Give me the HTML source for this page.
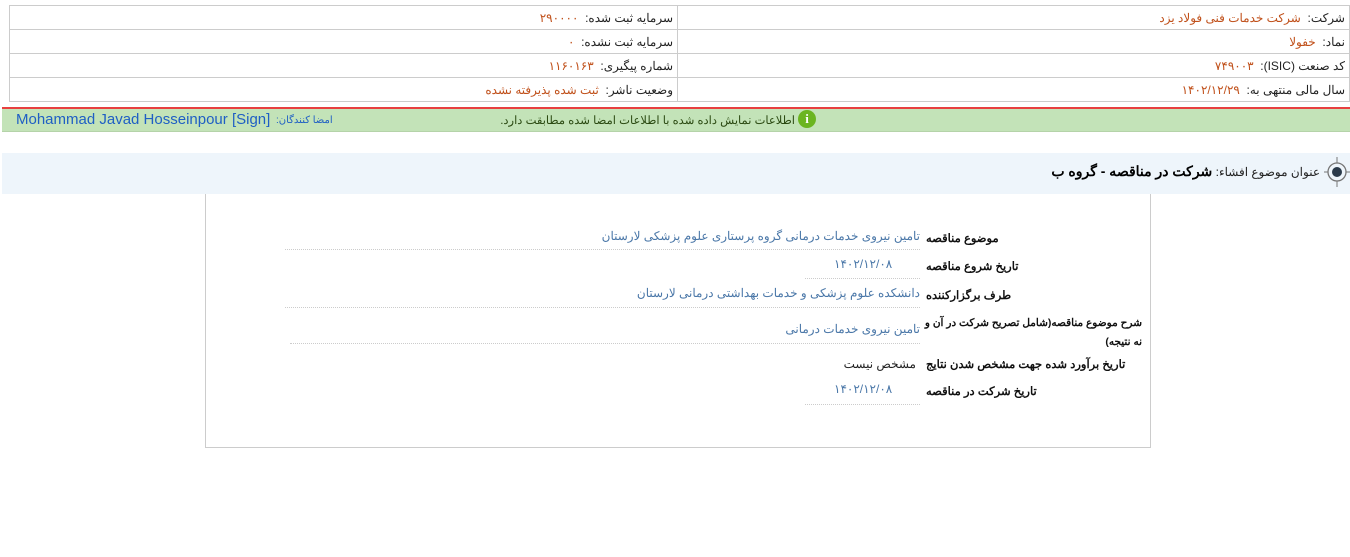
<!DOCTYPE html>
<html><head><meta charset="utf-8"><style>
body{margin:0;width:1350px;height:557px;background:#fff;font-family:"Liberation Sans","Noto Sans CJK SC",sans-serif;font-size:12px;position:relative;overflow:hidden}
.a{position:absolute;white-space:nowrap}
table.t{position:absolute;left:9px;top:5px;width:1341px;border-collapse:collapse;direction:rtl}
table.t td{border:1px solid #ccc;height:23px;padding:0 4px;text-align:right;font-size:12px;color:#222}
.o{color:#c0501a}
.lbl{font-weight:bold;font-size:11.5px;color:#111;direction:rtl;text-align:right}
.val{color:#4a77a8;direction:rtl}
.dl{position:absolute;border-bottom:1px dotted #ccc;height:0}
</style></head><body>
<table class="t"><tr><td style="width:663px">شرکت:&nbsp; <span class="o">شرکت خدمات فنی فولاد یزد</span></td><td>سرمایه ثبت شده:&nbsp; <span class="o">۲۹۰۰۰۰</span></td></tr>
<tr><td>نماد:&nbsp; <span class="o">خفولا</span></td><td>سرمایه ثبت نشده:&nbsp; <span class="o">۰</span></td></tr>
<tr><td>کد صنعت (ISIC):&nbsp; <span class="o">۷۴۹۰۰۳</span></td><td>شماره پیگیری:&nbsp; <span class="o">۱۱۶۰۱۶۳</span></td></tr>
<tr><td>سال مالی منتهی به:&nbsp; <span class="o">۱۴۰۲/۱۲/۲۹</span></td><td>وضعیت ناشر:&nbsp; <span class="o">ثبت شده پذیرفته نشده</span></td></tr></table>
<div class="a" style="left:2px;top:107px;width:1348px;height:2px;background:#e84040"></div>
<div class="a" style="left:2px;top:109px;width:1348px;height:22px;background:#c3e3b8;border-bottom:1px solid #b5d3a9"></div>
<div class="a" style="left:16px;top:111px;font-size:15px;color:#1f5fc4">Mohammad Javad Hosseinpour [Sign]</div>
<div class="a" style="left:276px;top:115px;font-size:10px;color:#1f5fc4;direction:rtl">امضا کنندگان:</div>
<div class="a" style="right:555px;top:113px;font-size:11.5px;color:#2b4a12;direction:rtl">اطلاعات نمایش داده شده با اطلاعات امضا شده مطابقت دارد.</div>
<div class="a" style="left:798px;top:110px;width:18px;height:18px;border-radius:50%;background:#6bb520;color:#fff;font-weight:bold;text-align:center;line-height:18px;font-size:13px;font-family:'Liberation Serif',serif">i</div>
<div class="a" style="left:2px;top:153px;width:1348px;height:41px;background:#eef5fb"></div>
<svg class="a" style="left:1324px;top:156px" width="26" height="32"><line x1="13" y1="1" x2="13" y2="31" stroke="#777"/><line x1="0" y1="16" x2="26" y2="16" stroke="#777"/><circle cx="13" cy="16" r="9" fill="#eef5fb" stroke="#777" stroke-width="1.3"/><circle cx="13" cy="16" r="5" fill="#2a3a4a"/></svg>
<div class="a" style="right:30px;top:163px;direction:rtl;font-size:12px;color:#222">عنوان موضوع افشاء: <b style="font-size:14px;color:#000">شرکت در مناقصه - گروه ب</b></div>
<div class="a" style="left:205px;top:194px;width:944px;height:253px;border:1px solid #ccc;border-top:none"></div>
<div class="a lbl" style="left:926px;top:231px">موضوع مناقصه</div>
<div class="a val" style="right:430px;top:229px">تامین نیروی خدمات درمانی گروه پرستاری علوم پزشکی لارستان</div>
<div class="dl" style="left:285px;width:635px;top:249px"></div>
<div class="a lbl" style="left:926px;top:259px">تاریخ شروع مناقصه</div>
<div class="a val" style="left:834px;top:257px">۱۴۰۲/۱۲/۰۸</div>
<div class="dl" style="left:805px;width:115px;top:278px"></div>
<div class="a lbl" style="left:926px;top:288px">طرف برگزارکننده</div>
<div class="a val" style="right:430px;top:286px">دانشکده علوم پزشکی و خدمات بهداشتی درمانی لارستان</div>
<div class="dl" style="left:285px;width:635px;top:307px"></div>
<div class="a lbl" style="left:922px;width:220px;top:314px;line-height:19px;font-size:10.5px">شرح موضوع مناقصه(شامل تصریح شرکت در آن و<br>نه نتیجه)</div>
<div class="a val" style="right:430px;top:322px">تامین نیروی خدمات درمانی</div>
<div class="dl" style="left:290px;width:630px;top:343px"></div>
<div class="a lbl" style="left:926px;top:357px">تاریخ برآورد شده جهت مشخص شدن نتایج</div>
<div class="a" style="right:434px;top:357px;direction:rtl;color:#222">مشخص نیست</div>
<div class="a lbl" style="left:926px;top:384px">تاریخ شرکت در مناقصه</div>
<div class="a val" style="left:834px;top:382px">۱۴۰۲/۱۲/۰۸</div>
<div class="dl" style="left:805px;width:115px;top:404px"></div>
</body></html>
